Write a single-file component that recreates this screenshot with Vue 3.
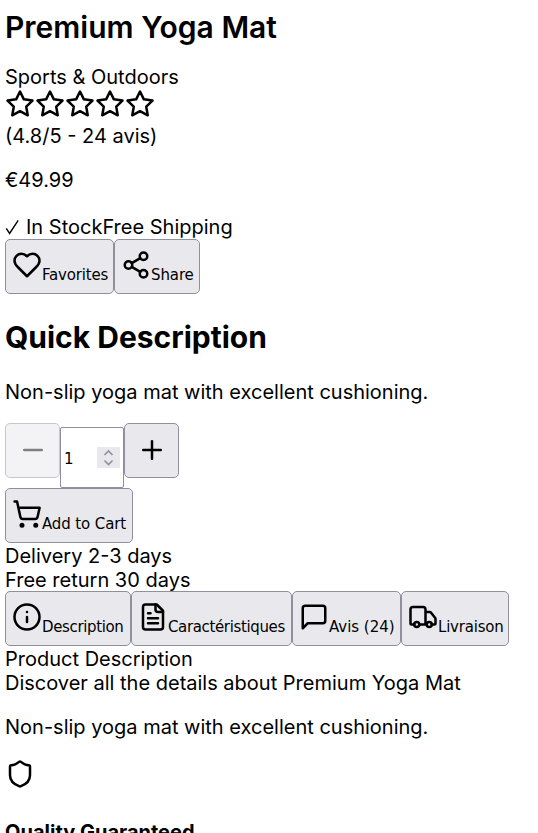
<script setup>
import { ref } from 'vue'

const quantity = ref(1)

const icons = {
  star: '<polygon points="12 2 15.09 8.26 22 9.27 17 14.14 18.18 21.02 12 17.77 5.82 21.02 7 14.14 2 9.27 8.91 8.26 12 2"/>',
  heart: '<path d="M19 14c1.49-1.46 3-3.21 3-5.5A5.5 5.5 0 0 0 16.5 3c-1.76 0-3 .5-4.5 2-1.5-1.5-2.74-2-4.5-2A5.5 5.5 0 0 0 2 8.5c0 2.3 1.5 4.05 3 5.5l7 7Z"/>',
  share: '<circle cx="18" cy="5" r="3"/><circle cx="6" cy="12" r="3"/><circle cx="18" cy="19" r="3"/><path d="M8.59 13.51l6.83 3.98M15.41 6.51l-6.82 3.98"/>',
  minus: '<path d="M5 12h14"/>',
  plus: '<path d="M5 12h14M12 5v14"/>',
  cart: '<circle cx="8" cy="21" r="1"/><circle cx="19" cy="21" r="1"/><path d="M2.05 2.05h2l2.66 12.42a2 2 0 0 0 2 1.58h9.78a2 2 0 0 0 1.95-1.57l1.65-7.43H5.12"/>',
  info: '<circle cx="12" cy="12" r="10"/><path d="M12 16v-4M12 8h.01"/>',
  file: '<path d="M15 2H6a2 2 0 0 0-2 2v16a2 2 0 0 0 2 2h12a2 2 0 0 0 2-2V7Z"/><path d="M14 2v4a2 2 0 0 0 2 2h4M10 9H8M16 13H8M16 17H8"/>',
  message: '<path d="M21 15a2 2 0 0 1-2 2H7l-4 4V5a2 2 0 0 1 2-2h14a2 2 0 0 1 2 2z"/>',
  truck: '<path d="M14 18V6a2 2 0 0 0-2-2H4a2 2 0 0 0-2 2v11a1 1 0 0 0 1 1h2M15 18H9M19 18h2a1 1 0 0 0 1-1v-3.65a1 1 0 0 0-.22-.624l-3.48-4.35A1 1 0 0 0 17.52 8H14"/><circle cx="17" cy="18" r="2"/><circle cx="7" cy="18" r="2"/>',
  shield: '<path d="M20 13c0 5-3.5 7.5-7.66 8.95a1 1 0 0 1-.67-.01C7.5 20.5 4 18 4 13V6a1 1 0 0 1 1-1c2 0 4.5-1.2 6.24-2.72a1.17 1.17 0 0 1 1.52 0C14.51 3.81 17 5 19 5a1 1 0 0 1 1 1z"/>',
}
</script>

<template>
  <main class="page">
    <h1>Premium Yoga Mat</h1>
    <div class="line">Sports &amp; Outdoors</div>
    <div class="stars">
      <svg v-for="n in 5" :key="n" class="icon" viewBox="0 0 24 24" v-html="icons.star"></svg>
    </div>
    <div class="line">(4.8/5 - 24 avis)</div>
    <p class="price">€49.99</p>
    <div class="line stock"><svg class="check" viewBox="0 0 15 18"><path d="M1.2 10.3l3.4 5.2L13.2 2.3"/></svg><span>In Stock</span><span>Free Shipping</span></div>
    <div class="row">
      <button class="btn favorites"><svg class="icon" viewBox="0 0 24 24" v-html="icons.heart"></svg><span>Favorites</span></button>
      <button class="btn share"><svg class="icon" viewBox="0 0 24 24" v-html="icons.share"></svg><span>Share</span></button>
    </div>
    <h2>Quick Description</h2>
    <p class="summary">Non-slip yoga mat with excellent cushioning.</p>
    <div class="row quantity">
      <button class="btn step" :disabled="quantity <= 1" @click="quantity--"><svg class="icon" viewBox="0 0 24 24" v-html="icons.minus"></svg></button>
      <div class="field">
        <span>{{ quantity }}</span>
        <svg class="spinner" viewBox="0 0 23 21"><path d="M7.5 8l4-4 4 4M7.5 13.5l4 4 4-4"/></svg>
      </div>
      <button class="btn step" @click="quantity++"><svg class="icon" viewBox="0 0 24 24" v-html="icons.plus"></svg></button>
    </div>
    <div class="row">
      <button class="btn cart"><svg class="icon" viewBox="0 0 24 24" v-html="icons.cart"></svg><span>Add to Cart</span></button>
    </div>
    <div class="line delivery">Delivery 2-3 days</div>
    <div class="line">Free return 30 days</div>
    <div class="row tabs">
      <button class="btn tab-description"><svg class="icon" viewBox="0 0 24 24" v-html="icons.info"></svg><span>Description</span></button>
      <button class="btn tab-features"><svg class="icon" viewBox="0 0 24 24" v-html="icons.file"></svg><span>Caractéristiques</span></button>
      <button class="btn tab-reviews"><svg class="icon" viewBox="0 0 24 24" v-html="icons.message"></svg><span>Avis (24)</span></button>
      <button class="btn tab-shipping"><svg class="icon" viewBox="0 0 24 24" v-html="icons.truck"></svg><span>Livraison</span></button>
    </div>
    <div class="line details">Product Description</div>
    <div class="line">Discover all the details about Premium Yoga Mat</div>
    <p class="body">Non-slip yoga mat with excellent cushioning.</p>
    <svg class="icon shield" viewBox="0 0 24 24" v-html="icons.shield"></svg>
    <h4>Quality Guaranteed</h4>
  </main>
</template>

<style>
body { margin: 0; background: #fff; overflow: hidden; }
</style>

<style scoped>
.page {
  box-sizing: border-box;
  height: 833px;
  overflow: hidden;
  padding: 9px 5px 0;
  font: 20px/24px Inter, sans-serif;
  color: #000;
}
h1, h2, h4, p { margin: 0; }
h1 { font-size: 30px; line-height: 36px; font-weight: 600; margin-bottom: 20px; }
h2 { font-size: 30px; line-height: 36px; font-weight: 700; margin: 25px 0; }
h4 { font-size: 20px; line-height: 24px; font-weight: 700; margin-top: 31px; }
.line { height: 24px; white-space: nowrap; }
.icon {
  display: block;
  flex: none;
  width: 30px;
  height: 30px;
  fill: none;
  stroke: currentColor;
  stroke-width: 2;
  stroke-linecap: round;
  stroke-linejoin: round;
}
.stars { display: flex; height: 35px; }
.price { margin: 20px 0 23px; }
.stock { display: flex; }
.check { width: 15px; height: 18px; margin: 3px 6px 0 0; fill: none; stroke: #000; stroke-width: 1.4; }
.row { display: flex; align-items: flex-start; }
.btn {
  box-sizing: border-box;
  display: flex;
  height: 55px;
  margin: 0;
  padding: 10px 0 0 6px;
  border: 1px solid #8f8f9d;
  border-radius: 5px;
  background: #e9e9ed;
  color: #000;
  font: 16.67px/20px "DejaVu Sans Condensed", "DejaVu Sans", sans-serif;
  font-stretch: condensed;
  letter-spacing: -0.35px;
  white-space: nowrap;
}
.btn span { margin-top: 15px; }
.favorites { width: 109px; letter-spacing: -0.15px; }
.share { width: 86px; letter-spacing: -0.1px; }
.step { width: 55px; padding: 11px 0 0 12px; }
.step:disabled { opacity: 0.5; }
.summary { margin-bottom: 19px; }
.quantity { height: 65px; }
.field {
  box-sizing: border-box;
  display: flex;
  align-items: center;
  justify-content: space-between;
  width: 64px;
  height: 61px;
  margin-top: 4px;
  padding: 3px 3px 0 3px;
  border: 1px solid #8f8f9d;
  border-radius: 2px;
  font: 16.67px/20px "DejaVu Sans Condensed", "DejaVu Sans", sans-serif;
  font-stretch: condensed;
}
.spinner { width: 23px; height: 21px; margin-bottom: 4px; background: #e9e9ed; fill: none; stroke: #9191a0; stroke-width: 1.7; }
.cart { width: 128px; letter-spacing: -0.1px; }
.delivery { margin-top: 1px; }
.tabs { margin-top: -1px; }
.tab-description { width: 126px; }
.tab-features { width: 161px; }
.tab-reviews { width: 109px; letter-spacing: 0; }
.tab-shipping { width: 108px; letter-spacing: -0.2px; }
.details { margin-top: 1px; }
.body { margin: 20px 0; }
</style>
